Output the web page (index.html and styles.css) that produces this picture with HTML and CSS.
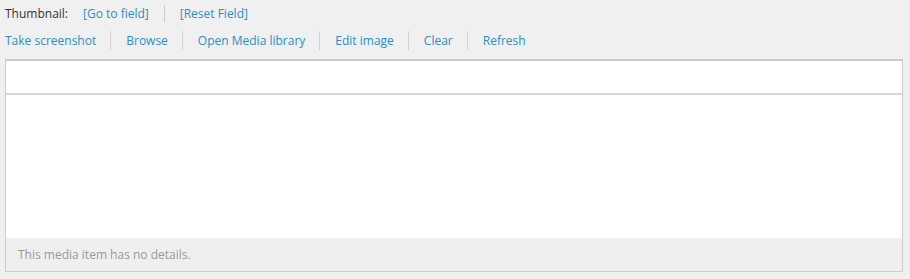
FILE: index.html
```html
<!DOCTYPE html>
<html lang="en">
  <head>
    <meta charset="utf-8" />
    <title>Thumbnail field</title>
    <link rel="stylesheet" href="styles.css">
  </head>
  <body>
    <div class="field">
      <!-- Field label and field actions -->
      <div class="field-header">
        <span class="field-label">Thumbnail:</span>
        <a class="field-link" href="#">[Go to field]</a>
        <a class="field-link" href="#">[Reset Field]</a>
      </div>

      <!-- Media commands -->
      <div class="field-commands">
        <a class="cmd" href="#">Take screenshot</a>
        <a class="cmd" href="#">Browse</a>
        <a class="cmd" href="#">Open Media library</a>
        <a class="cmd" href="#">Edit image</a>
        <a class="cmd" href="#">Clear</a>
        <a class="cmd" href="#">Refresh</a>
      </div>

      <!-- Image frame -->
      <div class="media-frame">
        <div class="media-path"></div>
        <div class="media-preview"></div>
        <div class="media-details">This media item has no details.</div>
      </div>
    </div>
  </body>
</html>
```

FILE: styles.css
```css
body {
  margin: 0;
  background: #f0f0f0;
  font-family: "Open Sans", "Liberation Sans", sans-serif;
  font-size: 12px;
}

.field {
  padding: 0 7px 0 5px;
}

/* Label row */
.field-header {
  display: flex;
  align-items: center;
  height: 27px;
}

.field-label {
  color: #333;
  margin-right: 15px;
}

.field-link {
  color: #2b8fc4;
  text-decoration: none;
  padding: 0 15px 0 0;
}

.field-link + .field-link {
  border-left: 1px solid #ccc;
  padding-left: 15px;
}

/* Command row */
.field-commands {
  display: flex;
  align-items: center;
  height: 27px;
}

.cmd {
  color: #2b8fc4;
  text-decoration: none;
  padding: 0 14px 0 15px;
  border-left: 1px solid #d4d4d4;
  line-height: 19px;
}

.cmd:first-child {
  border-left: none;
  padding-left: 0;
}

/* Frame */
.media-frame {
  margin-top: 5px;
  background: #fff;
  border: 1px solid #ccc;
  border-top-width: 2px;
}

.media-path {
  height: 32px;
  border-bottom: 2px solid #d6d6d6;
}

.media-preview {
  height: 143px;
}

.media-details {
  background: #efefef;
  color: #999;
  height: 33px;
  line-height: 33px;
  padding-left: 12px;
}
```
